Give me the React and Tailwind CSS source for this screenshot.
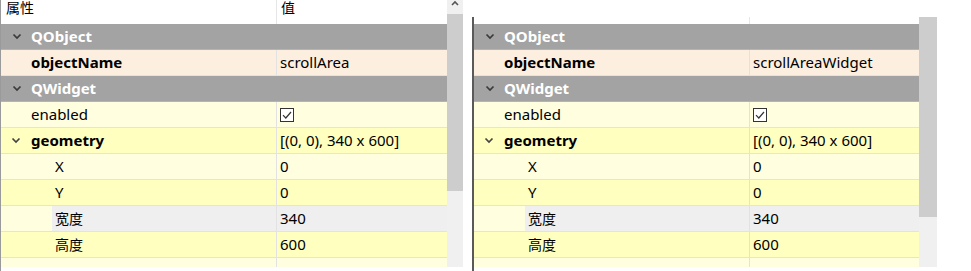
import React from 'react'

const FONT = { fontFamily: '"Noto Sans", "Noto Sans CJK SC", sans-serif' }

function Chevron({ className = '' }) {
  return (
    <svg width="10" height="7" viewBox="0 0 10 7" className={className}>
      <path d="M1.5 1.5 L5 5 L8.5 1.5" fill="none" stroke="currentColor" strokeWidth="1.7" />
    </svg>
  )
}

function CheckBox() {
  return (
    <svg width="14" height="14" viewBox="0 0 14 14">
      <rect x="0.5" y="0.5" width="13" height="13" fill="#fff" stroke="#333" strokeWidth="1" />
      <path d="M3 7.2 L5.8 10 L11 4" fill="none" stroke="#333" strokeWidth="1.2" />
    </svg>
  )
}

function GroupRow({ label }) {
  return (
    <div className="flex h-[26px] items-center bg-[#a3a3a3] border-b border-[#b4b4b4]">
      <div className="w-[30px] flex justify-center pl-[1px] text-[#3a3a3a]">
        <Chevron />
      </div>
      <span className="text-[15px] font-bold text-white">{label}</span>
    </div>
  )
}

function PropRow({ name, value, bg, bold, indent, chevron, check, hover, cjk }) {
  return (
    <div className={`flex h-[26px] border-b border-[#e4e4dc] ${bg}`}>
      <div className="flex w-[275px] items-center">
        <div className={`h-full flex items-center justify-center text-[#444] ${indent ? 'w-[51px]' : 'w-[30px]'}`}>
          {chevron ? <Chevron /> : null}
        </div>
        <div className={`flex-1 h-full flex items-center ${hover ? 'bg-[#efefef]' : ''}`}>
          <span className={`${cjk ? 'text-[14px]' : 'text-[15px]'} text-black ${bold ? 'font-bold' : ''} ${indent ? 'pl-[3px]' : ''}`}>
            {name}
          </span>
        </div>
      </div>
      <div className="w-px bg-[#e2e2e2]" />
      <div className={`flex-1 flex items-center pl-[3px] ${hover ? 'bg-[#efefef]' : ''}`}>
        {check ? <CheckBox /> : <span className="text-[15px] text-black">{value}</span>}
      </div>
    </div>
  )
}

function Rows({ name }) {
  return (
    <>
      <GroupRow label="QObject" />
      <PropRow name="objectName" value={name} bg="bg-[#fdefdf]" bold />
      <GroupRow label="QWidget" />
      <PropRow name="enabled" bg="bg-[#ffffe0]" check />
      <PropRow name="geometry" value="[(0, 0), 340 x 600]" bg="bg-[#ffffc0]" bold chevron />
      <PropRow name="X" value="0" bg="bg-[#ffffe0]" indent />
      <PropRow name="Y" value="0" bg="bg-[#ffffc0]" indent />
      <PropRow name="宽度" value="340" bg="bg-[#ffffe0]" indent hover cjk />
      <PropRow name="高度" value="600" bg="bg-[#ffffc0]" indent cjk />
      <div className="h-[9px] bg-[#ffffe0] flex">
        <div className="w-[275px]" />
        <div className="w-px bg-[#e2e2e2]" />
      </div>
    </>
  )
}

export default function App() {
  return (
    <div className="w-[971px] h-[271px] bg-white flex overflow-hidden" style={FONT}>
      {/* left editor */}
      <div className="w-[447px] flex flex-col border-l border-[#9a9a9a]">
        <div className="h-[24px] flex overflow-hidden">
          <div className="w-[275px] pl-[5px] -mt-[3px] text-[14px] text-black leading-[22px]">属性</div>
          <div className="w-px bg-[#e6e6e6]" />
          <div className="flex-1 pl-[4px] -mt-[3px] text-[14px] text-black leading-[22px]">值</div>
        </div>
        <Rows name="scrollArea" />
      </div>
      <div className="w-[16px] h-[267px] flex flex-col bg-[#f0f0f0]">
        <div className="h-[14px] flex justify-center items-start text-[#555]">
          <svg width="8" height="6" viewBox="0 0 8 6">
            <path d="M1 5 L4 2 L7 5" fill="none" stroke="currentColor" strokeWidth="1.6" />
          </svg>
        </div>
        <div className="h-[177px] bg-[#cdcdcd]" />
      </div>
      <div className="w-[9px]" />
      {/* right editor */}
      <div className="w-[447px] flex flex-col">
        <div className="h-[17px]" />
        <div className="flex-1 flex border-l-2 border-[#5a5a5a] h-[250px]">
          <div className="w-[445px] flex flex-col">
            <div className="h-[7px] flex">
              <div className="w-[275px]" />
              <div className="w-px bg-[#e6e6e6]" />
            </div>
            <Rows name="scrollAreaWidget" />
          </div>
        </div>
      </div>
      <div className="w-[18px] flex flex-col pt-[17px]">
        <div className="h-[200px] bg-[#cdcdcd]" />
        <div className="h-[50px] bg-[#f0f0f0]" />
      </div>
    </div>
  )
}
